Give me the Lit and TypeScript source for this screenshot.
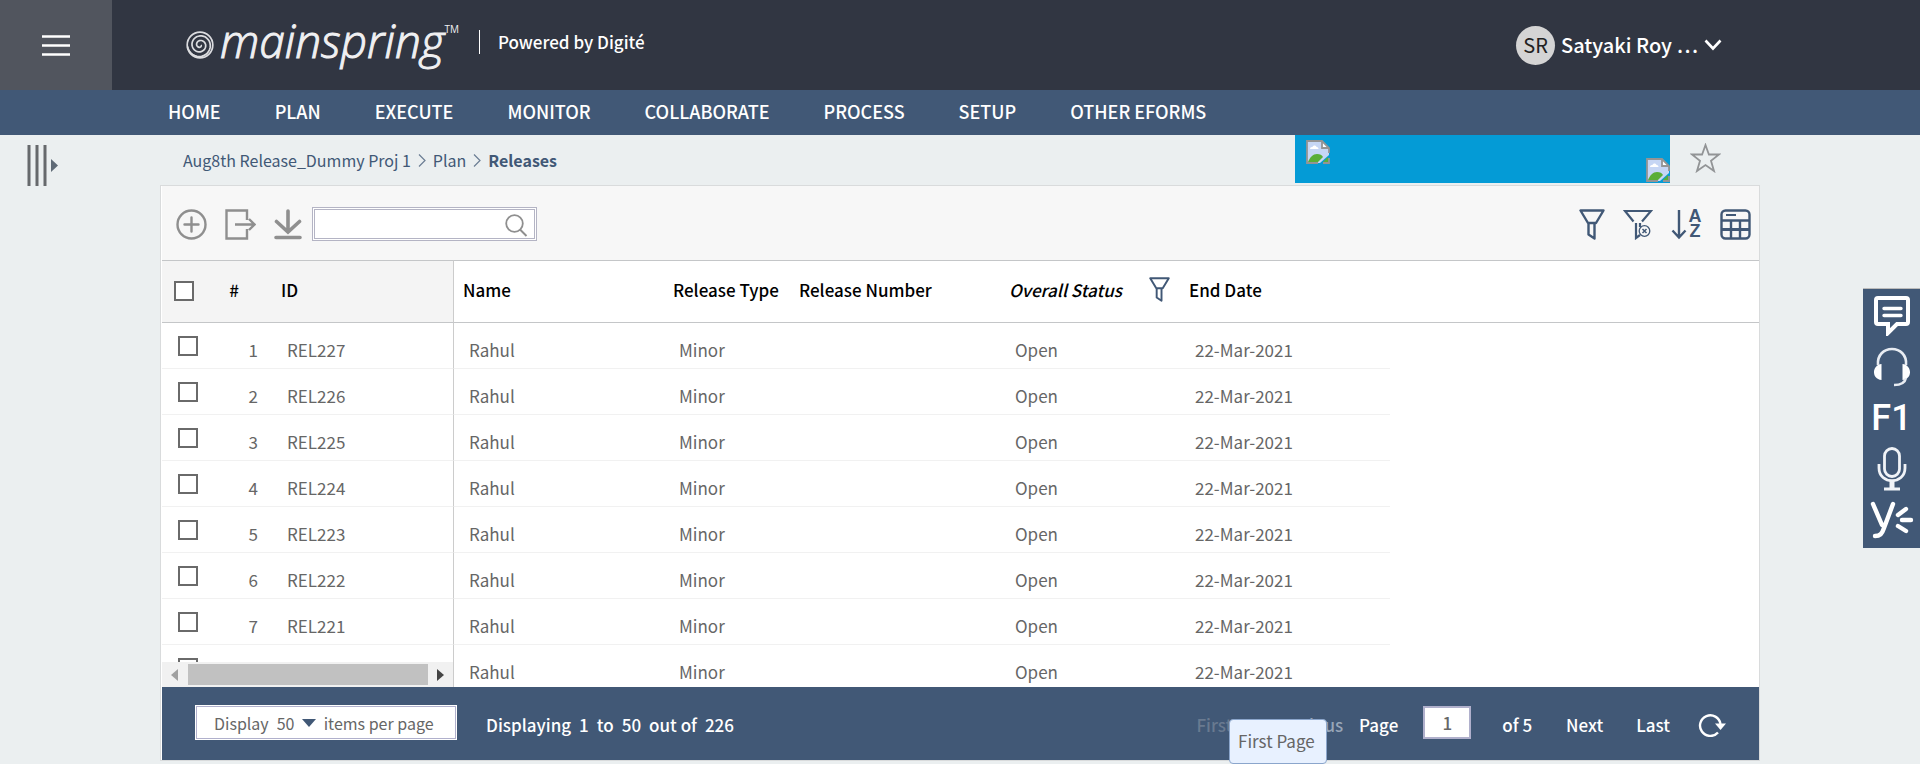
import { LitElement, html, css, svg } from "lit";
import { customElement, state } from "lit/decorators.js";

interface Release {
  id: string;
  name: string;
  type: string;
  number: string;
  status: string;
  end: string;
}

const RELEASES: Release[] = [227, 226, 225, 224, 223, 222, 221, 220].map((n) => ({
  id: `REL${n}`,
  name: "Rahul",
  type: "Minor",
  number: "",
  status: "Open",
  end: "22-Mar-2021",
}));

const MENU = ["HOME", "PLAN", "EXECUTE", "MONITOR", "COLLABORATE", "PROCESS", "SETUP", "OTHER EFORMS"];

const spiralPath = (() => {
  const pts: string[] = [];
  for (let a = 0; a <= Math.PI * 5; a += 0.2) {
    const r = 1 + a * 0.74;
    pts.push(`${(14 + r * Math.cos(a)).toFixed(1)} ${(14 + r * Math.sin(a)).toFixed(1)}`);
  }
  return "M" + pts.join("L");
})();

const funnel = svg`<path d="M1.500 1.500h23L17 14H9z M9.500 14.500v11l6 4v-15" fill="none" stroke="currentColor" stroke-width="2.400" stroke-linejoin="round"/>`;

const brokenImage = html`<svg width="24" height="24" viewBox="0 0 24 24" role="img" aria-label="Image">
  <path d="M1 1h15l7 7v7L14 23H1z" fill="#c6d6f4"/>
  <path d="M2 22c2-5 5-8 9-8 3 0 5 1 6 3l-5 5z" fill="#5aae36"/>
  <path d="M4 9c0-2 2-2 2.500-2 .5-2 3.500-2 4 0 2 0 2 2 2 2z" fill="#fff"/>
  <path d="M16 1v7h7z" fill="#fff"/>
  <path d="M17 22l5-5v5z" fill="#5aae36"/>
  <path d="M12 23H1V1h15l7 7v5M16 1v7h7M23 18v5h-6" fill="none" stroke="#949494" stroke-width="1.800"/>
</svg>`;

@customElement("app-root")
export class AppRoot extends LitElement {
  @state() private page = "1";

  static styles = css`
    :host {
      display: flex;
      flex-direction: column;
      height: 100vh;
      background: #ebeff0;
      color: #666;
      font: 400 17px/24px "Noto Sans CJK SC", "Open Sans", sans-serif;
      overflow: hidden;
    }
    * { box-sizing: border-box; }
    svg { display: block; flex: none; }
    button {
      font: inherit; color: inherit; background: none; border: 0; padding: 0; margin: 0; cursor: pointer;
    }
    a { color: inherit; text-decoration: none; }
    input { font: inherit; margin: 0; }

    .top { display: flex; align-items: center; height: 90px; flex: none; background: #313642; color: #fff; }
    .burger { width: 112px; height: 90px; background: #51555e; display: grid; place-items: center; padding-top: 1px; }
    .logo { display: flex; align-items: center; margin-left: 74px; }
    .brand { display: flex; color: #f0f0f2; margin-left: 6px; padding-bottom: 10px; }
    .word { font: italic 300 46px/64px "Open Sans", sans-serif; -webkit-text-stroke: 1px #f0f0f2; }
    .tm { font: 400 10px/12px "Open Sans", sans-serif; padding-top: 15px; }
    .powered { font-weight: 500; border-left: 1px solid #fff; margin-left: 20px; padding-left: 18px; margin-bottom: 6px; }
    .user { display: flex; align-items: center; gap: 6px; margin: 0 198px 0 auto; font-size: 20px; font-weight: 500; }
    .avatar {
      width: 39px; height: 39px; border-radius: 50%; background: #d4d4d4; color: #222;
      display: grid; place-items: center; font-weight: 400;
    }

    .menu { display: flex; gap: 54px; align-items: center; height: 45px; flex: none; padding: 0 168px 4px; background: #415876; color: #fff; font-size: 18px; font-weight: 500; }

    .main { display: flex; flex-direction: column; flex: 1; min-height: 0; padding: 0 160px 3px; position: relative; }
    .drawer { position: absolute; left: 27px; top: 10px; }
    .crumbs { display: flex; height: 50px; flex: none; align-items: center; padding-left: 23px; color: #415876; }
    .trail { display: flex; align-items: center; gap: 7px; flex: 1; font-size: 16px; }
    .trail b { font-weight: 700; }
    .banner { display: flex; justify-content: space-between; width: 375px; height: 48px; background: #049bd6; padding: 5px 0 1px 11px; align-self: flex-start; }
    .banner svg:last-child { align-self: flex-end; }
    .star { margin: 0 39px 4px 20px; }

    .panel { display: flex; flex-direction: column; flex: 1; min-height: 0; border: 1px solid #d9dbdc; padding-left: 1px; background: #fff; }
    .tools { display: flex; align-items: center; height: 74px; flex: none; background: #f7f7f7; padding: 2px 8px 0 14px; color: #8f8f8f; }
    .acts { display: flex; align-items: center; gap: 18px; }
    .search { display: flex; align-items: center; width: 225px; height: 34px; margin-left: 10px; background: #fff; border: 3px double #b4b4c4; padding: 2px 6px 0 0; color: #8f8f8f; }
    .search input { flex: 1; min-width: 0; border: 0; outline: 0; background: none; padding: 0 6px; }
    .views { display: flex; align-items: center; gap: 18px; margin-left: auto; color: #415876; }
    .sort { display: flex; align-items: center; gap: 1px; }
    .az { display: grid; width: 14px; font: 700 18px/15px "Liberation Sans", sans-serif; text-align: center; }

    .sheet { position: relative; flex: 1; min-height: 0; overflow: hidden; }
    table { width: 100%; table-layout: fixed; border-collapse: separate; border-spacing: 0; }
    th { height: 63px; padding: 0 0 4px 9px; text-align: left; color: #000; font-weight: 500; border: solid #c4c6c8; border-width: 1px 0; white-space: nowrap; }
    td { height: 46px; padding: 9px 0 0 15px; border-bottom: 1px solid #f1f1f1; white-space: nowrap; }
    th.frozen { background: #f4f4f4; }
    .edge { border-right: 1px solid #ccc; }
    td.blank { border-bottom: 0; }
    th.tick { padding: 0 0 1px 12px; }
    td.tick { padding: 0 0 0 16px; }
    td.num { text-align: right; padding-left: 0; padding-right: 14px; }
    th.num { text-align: right; padding-right: 33px; }
    .c-tick { width: 50px; } .c-num { width: 60px; } .c-id { width: 182px; }
    .c-name { width: 210px; } .c-type { width: 126px; } .c-number { width: 210px; } .c-status { width: 180px; } .c-end { width: 210px; }
    .status { display: flex; align-items: center; justify-content: space-between; padding-right: 10px; font-style: italic; }
    .status button { color: #415876; }
    input[type="checkbox"] { appearance: none; display: block; width: 20px; height: 20px; border: 2px solid #6a6a6a; background: #fff; }

    .hbar { position: absolute; left: 0; bottom: 0; width: 291px; height: 25px; display: flex; align-items: center; justify-content: space-between; padding: 0 9px; background: #f1f1f1; }
    .thumb { width: 240px; height: 21px; background: #c1c1c1; }

    .foot { position: relative; display: flex; align-items: center; height: 73px; flex: none; background: #415876; color: #fff; padding: 2px 33px 0; font-weight: 500; }
    .size { display: flex; align-items: center; height: 35px; width: 262px; padding: 0 18px; background: #fff; border: 1px solid #fff; outline: 1px solid #b0b0cc; outline-offset: -2px; color: #666; font-size: 16px; font-weight: 400; margin-bottom: 4px; gap: 8px; }
    .pick { display: flex; align-items: center; gap: 7px; }
    select { appearance: none; border: 0; background: none; padding: 0; font: inherit; color: inherit; }
    .showing { margin-left: 29px; display: flex; gap: 8px; }
    .pager { display: flex; align-items: center; margin-left: auto; gap: 31px; }
    .off { color: #697a90; }
    .prev { color: #98a6b8; }
    .jump { display: flex; align-items: center; gap: 25px; }
    .jump input { width: 48px; height: 33px; text-align: center; border: 2px solid #b0b0cc; color: #666; padding: 0; margin-bottom: 5px; }
    .back { display: flex; gap: 40px; margin-right: -15px; }
    .ahead { display: flex; gap: 33px; margin-right: -3px; padding-left: 3px; }
    .tip { position: absolute; left: 1067px; top: 32px; padding: 9px 11px 10px 8px; border: 1px solid #8ba6cc; border-radius: 4px; background: #e8f1ff; color: #666; font-weight: 400; }

    .dock { position: absolute; right: 0; top: 153px; width: 57px; height: 260px; background: #415876; color: #fff; border-top: 1px solid #bbb; display: flex; flex-direction: column; align-items: center; justify-content: space-between; padding: 7px 0 9px; }
    .f1 { font: 500 36px/36px Roboto, sans-serif; padding-top: 3px; }
  `;

  private crumbMark() {
    return html`<svg width="8" height="13" viewBox="0 0 8 13" aria-hidden="true"><path d="M1 .5l6 6-6 6" fill="none" stroke="#6b7d93" stroke-width="1.200"/></svg>`;
  }

  private row(r: Release, i: number) {
    return html`<tr>
      <td class="tick"><input type="checkbox" aria-label="Select ${r.id}"></td>
      <td class="num">${i + 1}</td>
      <td class="edge">${r.id}</td>
      <td>${r.name}</td>
      <td>${r.type}</td>
      <td>${r.number}</td>
      <td>${r.status}</td>
      <td>${r.end}</td>
      <td class="blank"></td>
    </tr>`;
  }

  render() {
    return html`
      <header class="top">
        <button class="burger" aria-label="Menu">
          <svg width="28" height="22" viewBox="0 0 28 22"><path d="M0 1.500h28M0 10.500h28M0 19.500h28" stroke="#fff" stroke-width="2.600"/></svg>
        </button>
        <div class="logo">
          <svg width="28" height="28" viewBox="0 0 28 28" aria-hidden="true"><g fill="none" stroke="#dcdde0" stroke-width="1.700"><circle cx="14" cy="14" r="12.800"/><path d="${spiralPath}"/></g></svg>
          <div class="brand"><span class="word">mainspring</span><span class="tm">TM</span></div>
        </div>
        <span class="powered">Powered by Digité</span>
        <button class="user">
          <span class="avatar">SR</span><span>Satyaki Roy …</span>
          <svg width="18" height="12" viewBox="0 0 18 12"><path d="M1.500 1.500L9 9.500l7.500-8" fill="none" stroke="#fff" stroke-width="2.600"/></svg>
        </button>
      </header>
      <nav class="menu">${MENU.map((m) => html`<a href="#">${m}</a>`)}</nav>
      <main class="main">
        <button class="drawer" aria-label="Open drawer">
          <svg width="32" height="41" viewBox="0 0 32 41"><path d="M2 0v41M10 0v41M18 0v41" stroke="#66696c" stroke-width="3"/><path d="M24 14l7 6.500-7 6.500z" fill="#5f6a76"/></svg>
        </button>
        <div class="crumbs">
          <nav class="trail" aria-label="Breadcrumb">
            <a href="#">Aug8th Release_Dummy Proj 1</a>${this.crumbMark()}<a href="#">Plan</a>${this.crumbMark()}<b>Releases</b>
          </nav>
          <div class="banner">${brokenImage}${brokenImage}</div>
          <button class="star" aria-label="Favourite">
            <svg width="31" height="30" viewBox="0 0 31 30"><path d="M15.500 2l3.400 9.500H29l-8 6.300 3 10.200-8.500-6-8.500 6 3-10.200-8-6.300h10.100z" fill="none" stroke="#929496" stroke-width="1.800"/></svg>
          </button>
        </div>
        <section class="panel">
          <div class="tools">
            <div class="acts">
              <button aria-label="Add"><svg width="31" height="31" viewBox="0 0 31 31"><g fill="none" stroke="currentColor" stroke-width="2.400" stroke-linecap="round"><circle cx="15.500" cy="15.500" r="14"/><path d="M15.500 8.500v14M8.500 15.500h14"/></g></svg></button>
              <button aria-label="Export"><svg width="31" height="31" viewBox="0 0 31 31"><path d="M22 11V1.500H1.500v28H22V20M10 15.500h19M24 10l5.500 5.500L24 21" fill="none" stroke="currentColor" stroke-width="2.400"/></svg></button>
              <button aria-label="Download"><svg width="28" height="31" viewBox="0 0 28 31"><path d="M14 2v20M2.500 12.500L14 23l11.500-10.500M2 28.500h24" fill="none" stroke="currentColor" stroke-width="3.600" stroke-linecap="round"/></svg></button>
            </div>
            <label class="search"><input type="text" aria-label="Search">
              <svg width="23" height="23" viewBox="0 0 23 23"><circle cx="9.500" cy="9.500" r="8.300" fill="none" stroke="currentColor" stroke-width="1.800"/><path d="M15 15.500l6.500 6.500" stroke="currentColor" stroke-width="2"/></svg>
            </label>
            <div class="views">
              <button aria-label="Filter"><svg width="26" height="31" viewBox="0 0 26 31">${funnel}</svg></button>
              <button aria-label="Clear filter"><svg width="30" height="31" viewBox="0 0 30 31"><g fill="none" stroke="currentColor" stroke-width="2.200"><path d="M10.500 12.500L2 2h26l-9 10.500M13 14v15l4-3M17 14v4"/><circle cx="21.500" cy="22" r="5.300" stroke-width="1.300"/><path d="M19.500 20l4 4M23.500 20l-4 4" stroke-width="1.500"/></g></svg></button>
              <button class="sort" aria-label="Sort"><svg width="16" height="31" viewBox="0 0 16 31"><path d="M8 1v27M1.500 21.500l6.500 7 6.500-7" fill="none" stroke="currentColor" stroke-width="2.400"/></svg><span class="az"><span>A</span><span>Z</span></span></button>
              <button aria-label="Columns"><svg width="31" height="31" viewBox="0 0 31 31"><g fill="none" stroke="currentColor" stroke-width="2.400"><rect x="1.500" y="1.500" width="28" height="28" rx="4"/><path d="M1.500 11.500h28M11 11v18M20 11v18"/><path d="M1.500 20.500h28" stroke-width="3"/><path d="M6 6h10" stroke-width="2"/></g></svg></button>
            </div>
          </div>
          <div class="sheet">
            <table>
              <colgroup><col class="c-tick"><col class="c-num"><col class="c-id"><col class="c-name"><col class="c-type"><col class="c-number"><col class="c-status"><col class="c-end"><col></colgroup>
              <thead><tr>
                <th class="frozen tick"><input type="checkbox" aria-label="Select all"></th>
                <th class="frozen num">#</th>
                <th class="frozen edge">ID</th>
                <th>Name</th>
                <th>Release Type</th>
                <th>Release Number</th>
                <th><div class="status">Overall Status<button aria-label="Filter by status"><svg width="21" height="25" viewBox="0 0 26 31">${funnel}</svg></button></div></th>
                <th>End Date</th>
                <th></th>
              </tr></thead>
              <tbody>${RELEASES.map((r, i) => this.row(r, i))}</tbody>
            </table>
            <div class="hbar" role="scrollbar" aria-label="Scroll columns">
              <svg width="7" height="12" viewBox="0 0 7 12"><path d="M7 0v12L0 6z" fill="#a0a0a0"/></svg>
              <div class="thumb"></div>
              <svg width="7" height="12" viewBox="0 0 7 12"><path d="M0 0v12l7-6z" fill="#444"/></svg>
            </div>
          </div>
          <footer class="foot">
            <label class="size">Display
              <span class="pick"><select><option>50</option></select><svg width="14" height="8" viewBox="0 0 14 8"><path d="M0 0h14L7 8z" fill="#415876"/></svg></span>
              items per page</label>
            <div class="showing"><span>Displaying</span><span>1</span><span>to</span><span>50</span><span>out of</span><span>226</span></div>
            <div class="pager">
              <div class="back"><button class="off">First</button><button class="prev">Previous</button></div>
              <label class="jump">Page<input type="text" .value=${this.page}></label>
              <span>of 5</span>
              <div class="ahead"><button>Next</button><button>Last</button></div>
              <button aria-label="Refresh"><svg width="28" height="24" viewBox="0 0 28 24"><path d="M20 19.500A10.300 10.300 0 1 1 22.500 11" fill="none" stroke="#fff" stroke-width="2.400"/><path d="M17 10.500h11L22.500 17z" fill="#fff"/></svg></button>
            </div>
            <div class="tip" role="tooltip">First Page</div>
          </footer>
        </section>
        <aside class="dock">
          <button aria-label="Chat"><svg width="36" height="40" viewBox="0 0 36 40"><path d="M4 2h28q2 0 2 2v22q0 2-2 2H23l-9 9v-9H4q-2 0-2-2V4q0-2 2-2z" fill="none" stroke="#fff" stroke-width="4"/><path d="M10 12.500h17M10 19.500h17" stroke="#fff" stroke-width="3.400" stroke-linecap="round"/></svg></button>
          <button aria-label="Support"><svg width="38" height="40" viewBox="0 0 38 40"><path d="M5 18C4 8 11 2 19 2s15 6 14 16" fill="none" stroke="#e8ecf2" stroke-width="2.600"/><path d="M8.500 17v16C-2 32-1 18 8.500 17zM29.500 17v16c10.500-1 9.500-15 0-16z" fill="#fff"/><path d="M33 31c-1 5-5 7-12 7" fill="none" stroke="#e8ecf2" stroke-width="2.400"/></svg></button>
          <button class="f1" aria-label="Help">F1</button>
          <button aria-label="Voice"><svg width="30" height="44" viewBox="0 0 30 44"><g fill="none" stroke="#f0f3f7" stroke-width="2.800"><rect x="7.500" y="1.500" width="15" height="28" rx="7.500"/><path d="M2 17v4c0 17 26 17 26 0v-4M7 42h16"/><path d="M15 34v8" stroke-width="5"/></g></svg></button>
          <button aria-label="Yammer"><svg width="44" height="38" viewBox="0 0 44 38"><g fill="none" stroke="#fff" stroke-width="4.400" stroke-linecap="round"><path d="M3 3l9 21M23 3L14 27c-2 6-4 8-9 8"/><path d="M28 14l8-6M32 19h9M28 25l8 5"/></g></svg></button>
        </aside>
      </main>
    `;
  }
}
